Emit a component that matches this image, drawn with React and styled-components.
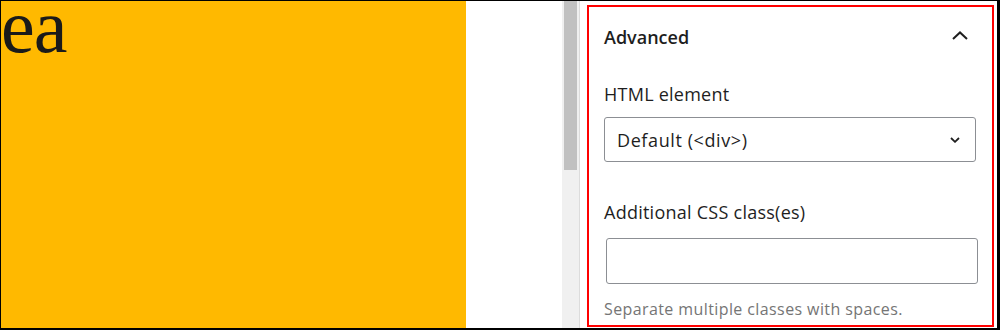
import styled, { createGlobalStyle } from "styled-components"

const Global = createGlobalStyle`
  html, body {
    margin: 0;
    padding: 0;
    background: #fff;
  }
  * { box-sizing: border-box; }
`;

export default function App() {
  return (
    <>
      <Global />
      <Frame>
        <Canvas>
          <Cover>
            <Title>ea</Title>
          </Cover>
          <Gutter />
        </Canvas>
        <Scrollbar>
          <Thumb />
        </Scrollbar>
        <Sidebar>
          <Panel>
            <Header>
              <HeaderTitle>Advanced</HeaderTitle>
              <Toggle width="16" height="9" viewBox="0 0 16 9">
                <path d="M1 8 L8 1.4 L15 8" fill="none" stroke="#1e1e1e" strokeWidth="2" />
              </Toggle>
            </Header>

            <Label top={33}>HTML element</Label>
            <Select>
              <span>Default (&lt;div&gt;)</span>
              <svg width="10" height="6" viewBox="0 0 10 6">
                <path d="M1 1 L5 4.8 L9 1" fill="none" stroke="#1e1e1e" strokeWidth="1.8" />
              </svg>
            </Select>

            <Label top={38}>Additional CSS class(es)</Label>
            <TextInput type="text" />
            <Help>Separate multiple classes with spaces.</Help>
          </Panel>
        </Sidebar>
      </Frame>
    </>
  )
}

const Frame = styled.div`
  width: 1000px;
  height: 330px;
  border-style: solid;
  border-color: #000;
  border-width: 1px 3px 2px 1px;
  display: flex;
  background: #fff;
`;

const Canvas = styled.div`
  width: 561px;
  display: flex;
  flex-shrink: 0;
`;

const Cover = styled.div`
  width: 465px;
  background: #ffb900;
  padding-top: 1px;
`;

const Title = styled.div`
  font-family: "Liberation Serif", serif;
  font-size: 76px;
  line-height: 76px;
  margin-top: -14px;
  color: #1a1a1a;
  letter-spacing: -1px;
`;

const Gutter = styled.div`
  flex: 1;
  background: #fff;
`;

const Scrollbar = styled.div`
  width: 18px;
  flex-shrink: 0;
  background: #f0f0f0;
  border-right: 1px solid #dcdcdc;
  padding-left: 2px;
`;

const Thumb = styled.div`
  width: 13px;
  height: 169px;
  background: #c1c1c1;
`;

const Sidebar = styled.div`
  flex: 1;
  padding: 4px 3px 1px 7px;
  display: flex;
`;

const Panel = styled.div`
  flex: 1;
  border: 2px solid #ff0000;
  padding: 18px 16px 0 15px;
  font-family: "Open Sans", "Noto Sans", sans-serif;
  color: #1e1e1e;
`;

const Header = styled.div`
  display: flex;
  align-items: flex-start;
  justify-content: space-between;
  padding-right: 8px;
`;

const HeaderTitle = styled.div`
  font-size: 18px;
  font-weight: 600;
  line-height: 24px;
`;

const Toggle = styled.svg`
  margin-top: 6px;
`;

const Label = styled.div`
  margin-top: ${p => p.top}px;
  font-size: 18px;
  line-height: 24px;
  letter-spacing: 0.25px;
`;

const Select = styled.div`
  margin-top: 11px;
  height: 45px;
  border: 1px solid #8c8f94;
  border-radius: 3px;
  display: flex;
  align-items: center;
  justify-content: space-between;
  padding: 0 15px 0 12px;
  font-size: 18px;
  line-height: 24px;
  letter-spacing: 0.6px;
`;

const TextInput = styled.input`
  display: block;
  margin: 14px -2px 0 2px;
  width: 100%;
  height: 46px;
  border: 1px solid #8c8f94;
  border-radius: 3px;
  background: #fff;
  outline: none;
`;

const Help = styled.div`
  margin-top: 15px;
  font-size: 16px;
  line-height: 20px;
  letter-spacing: 0.4px;
  color: #757575;
`;
